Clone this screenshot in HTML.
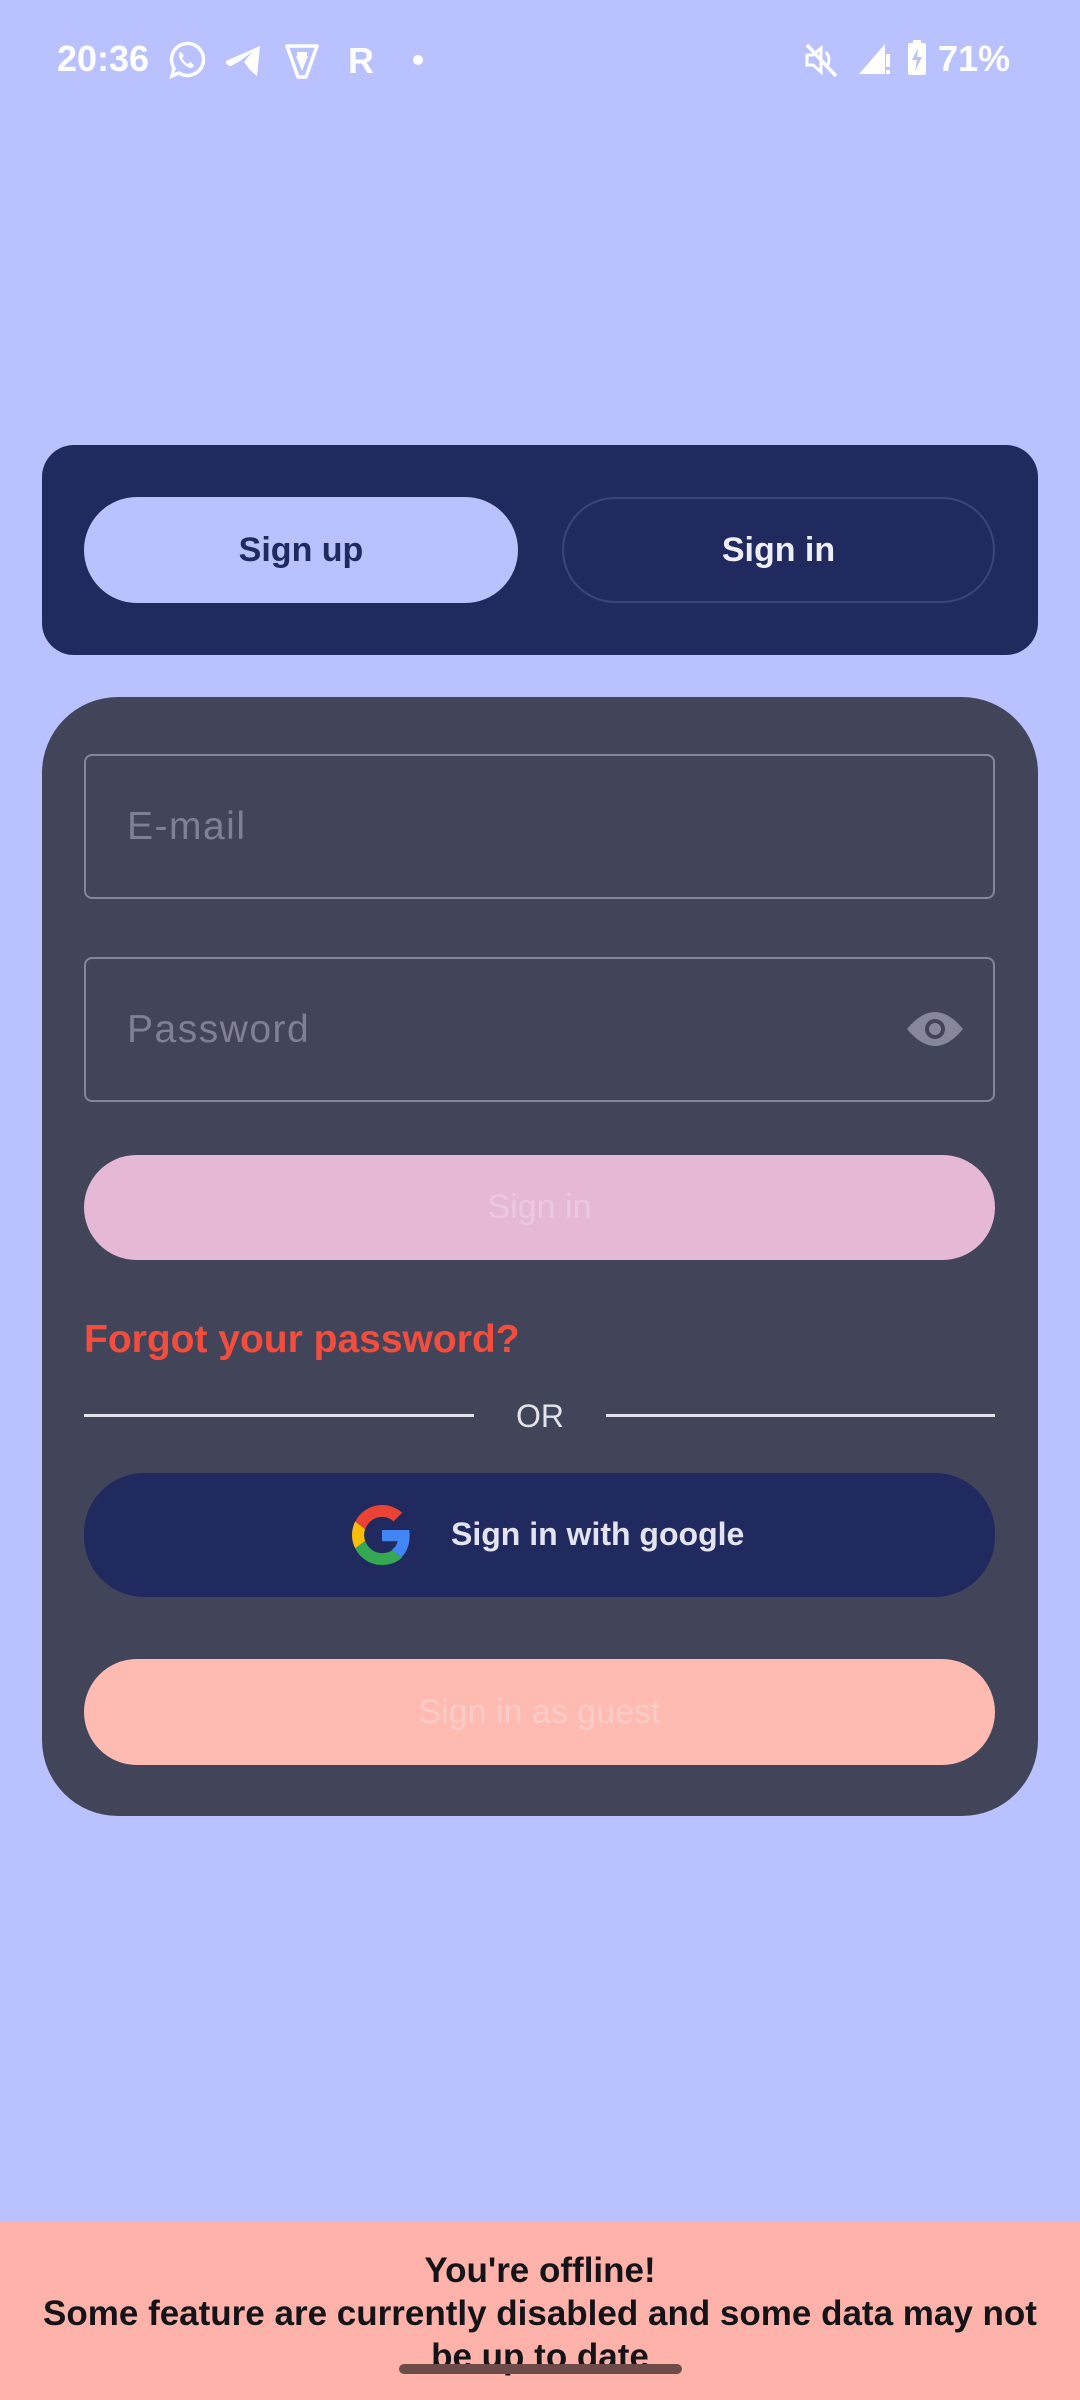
<!DOCTYPE html>
<html><head><meta charset="utf-8"><style>
*{margin:0;padding:0;box-sizing:border-box}
body{width:1080px;height:2400px;background:#b9c1ff;position:relative;overflow:hidden;font-family:"Liberation Sans",sans-serif}
.a{position:absolute}
.pill{position:absolute;border-radius:60px;display:flex;align-items:center;justify-content:center;font-size:34px;font-weight:bold}
.field{position:absolute;left:84px;width:911px;height:145px;border:2.5px solid #858699;border-radius:8px}
.ph{position:absolute;left:41px;top:49px;font-size:39px;color:#7f8094;letter-spacing:1.5px}
</style></head><body>
<!-- status bar -->
<div class="a" style="left:57px;top:38px;font-size:36px;color:#fff;font-weight:bold">20:36</div>
<svg class="a" style="left:166px;top:40px" width="40" height="40" viewBox="0 0 40 40"><path d="M6 36 L8 28 A16 16 0 1 1 13 33 Z" fill="none" stroke="#fff" stroke-width="3.5"/><path d="M14 12 q-2 2 0 7 q4 7 10 9 q3 0 4-3 l-4-3 l-2 2 q-4-2-6-6 l2-2 l-3-4z" fill="#fff"/></svg>
<svg class="a" style="left:224px;top:44px" width="40" height="34" viewBox="0 0 40 34"><path d="M2 17 L36 2 L33 32 L26 26 L20 18 L28 8 L16 17 L7 22 Q1 21 2 17Z" fill="#fff"/></svg>
<svg class="a" style="left:284px;top:42px" width="36" height="38" viewBox="0 0 36 38"><path d="M3 4 H33 L22 35 H14 Z" fill="none" stroke="#fff" stroke-width="3.5" stroke-linejoin="round"/><path d="M12 14 h12 l-6 15z" fill="#fff"/><rect x="13" y="10" width="10" height="4" fill="#fff"/></svg>
<div class="a" style="left:348px;top:40px;font-size:36px;font-weight:bold;color:#fff">R</div>
<div class="a" style="left:413px;top:55px;width:10px;height:10px;border-radius:5px;background:#fff"></div>
<svg class="a" style="left:804px;top:42px" width="34" height="36" viewBox="0 0 34 36"><path d="M3 13 h6 l8-7 v24 l-8-7 h-6z" fill="none" stroke="#fff" stroke-width="3"/><path d="M22 10 q6 8 0 16" fill="none" stroke="#fff" stroke-width="3"/><path d="M3 3 L32 34" stroke="#fff" stroke-width="3.5"/></svg>
<svg class="a" style="left:857px;top:42px" width="36" height="34" viewBox="0 0 36 34"><path d="M2 32 L28 2 V32Z" fill="#fff"/><rect x="29" y="12" width="4" height="13" fill="#fff"/><rect x="29" y="28" width="4" height="4" fill="#fff"/></svg>
<svg class="a" style="left:907px;top:40px" width="20" height="36" viewBox="0 0 20 36"><rect x="6" y="0" width="8" height="4" fill="#fff"/><rect x="1" y="3" width="18" height="32" rx="2" fill="#fff"/><path d="M11 8 L5 20 h5 l-2 11 l7-14 h-5z" fill="#b9c1ff"/></svg>
<div class="a" style="left:938px;top:38px;font-size:36px;color:#fff;font-weight:bold">71%</div>

<!-- top card -->
<div class="a" style="left:42px;top:445px;width:996px;height:210px;background:#212a5f;border-radius:32px"></div>
<div class="pill" style="left:84px;top:497px;width:434px;height:106px;background:#b9c1ff;color:#212a5f">Sign up</div>
<div class="pill" style="left:562px;top:497px;width:433px;height:106px;border:2px solid #3c4577;color:#eeeef7">Sign in</div>

<!-- main card -->
<div class="a" style="left:42px;top:697px;width:996px;height:1119px;background:#424559;border-radius:76px"></div>
<div class="field" style="top:754px"><div class="ph">E-mail</div></div>
<div class="field" style="top:957px"><div class="ph">Password</div>
<svg class="a" style="left:820px;top:50px" width="58" height="40" viewBox="0 0 58 40"><path d="M1 20 Q29 -14 57 20 Q29 54 1 20Z" fill="#86879a"/><circle cx="29" cy="20" r="10" fill="#424559"/><circle cx="29" cy="20" r="6" fill="#86879a"/></svg></div>
<div class="pill" style="left:84px;top:1155px;width:911px;height:105px;background:#e5b8d6;color:#ecc9e0;font-weight:normal">Sign in</div>
<div class="a" style="left:84px;top:1318px;font-size:39px;font-weight:bold;color:#f44d3e">Forgot your password?</div>
<div class="a" style="left:84px;top:1414px;width:390px;height:3px;background:#e3e3ec"></div>
<div class="a" style="left:606px;top:1414px;width:389px;height:3px;background:#e3e3ec"></div>
<div class="a" style="left:500px;top:1398px;width:80px;text-align:center;font-size:32px;color:#e3e3ec">OR</div>
<div class="pill" style="left:84px;top:1473px;width:911px;height:124px;background:#212a5f"></div>
<svg class="a" style="left:352px;top:1505px" width="60" height="60" viewBox="0 0 48 48"><path fill="#EA4335" d="M24 9.5c3.5 0 6.7 1.2 9.2 3.6l6.9-6.9C35.9 2.4 30.5 0 24 0 14.6 0 6.6 5.4 2.6 13.3l8 6.2C12.5 13.7 17.8 9.5 24 9.5z"/><path fill="#4285F4" d="M46.1 24.5c0-1.6-.1-3.1-.4-4.5H24v9h12.4c-.5 2.9-2.2 5.4-4.7 7l7.7 6c4.5-4.2 6.7-10.3 6.7-17.5z"/><path fill="#FBBC05" d="M10.5 28.6c-.5-1.4-.8-3-.8-4.6s.3-3.2.8-4.6l-8-6.2C.9 16.5 0 20.1 0 24s.9 7.5 2.6 10.8l7.9-6.2z"/><path fill="#34A853" d="M24 48c6.5 0 11.9-2.1 15.9-5.8l-7.7-6c-2.2 1.5-5 2.3-8.2 2.3-6.2 0-11.5-4.2-13.4-9.9l-8 6.2C6.6 42.6 14.6 48 24 48z"/></svg>
<div class="a" style="left:451px;top:1516px;font-size:32px;font-weight:bold;color:#e3e3f2">Sign in with google</div>
<div class="pill" style="left:84px;top:1659px;width:911px;height:106px;background:#ffbab1;color:#f8cdc8;font-weight:normal">Sign in as guest</div>

<!-- banner -->
<div class="a" style="left:0;top:2221px;width:1080px;height:179px;background:#ffb2aa"></div>
<div class="a" style="left:0;top:2249px;width:1080px;text-align:center;font-size:35px;font-weight:bold;line-height:43px;color:#141418">You're offline!<br>Some feature are currently disabled and some data may not<br>be up to date</div>
<div class="a" style="left:399px;top:2364px;width:283px;height:10px;border-radius:5px;background:#6b4c48"></div>
</body></html>
